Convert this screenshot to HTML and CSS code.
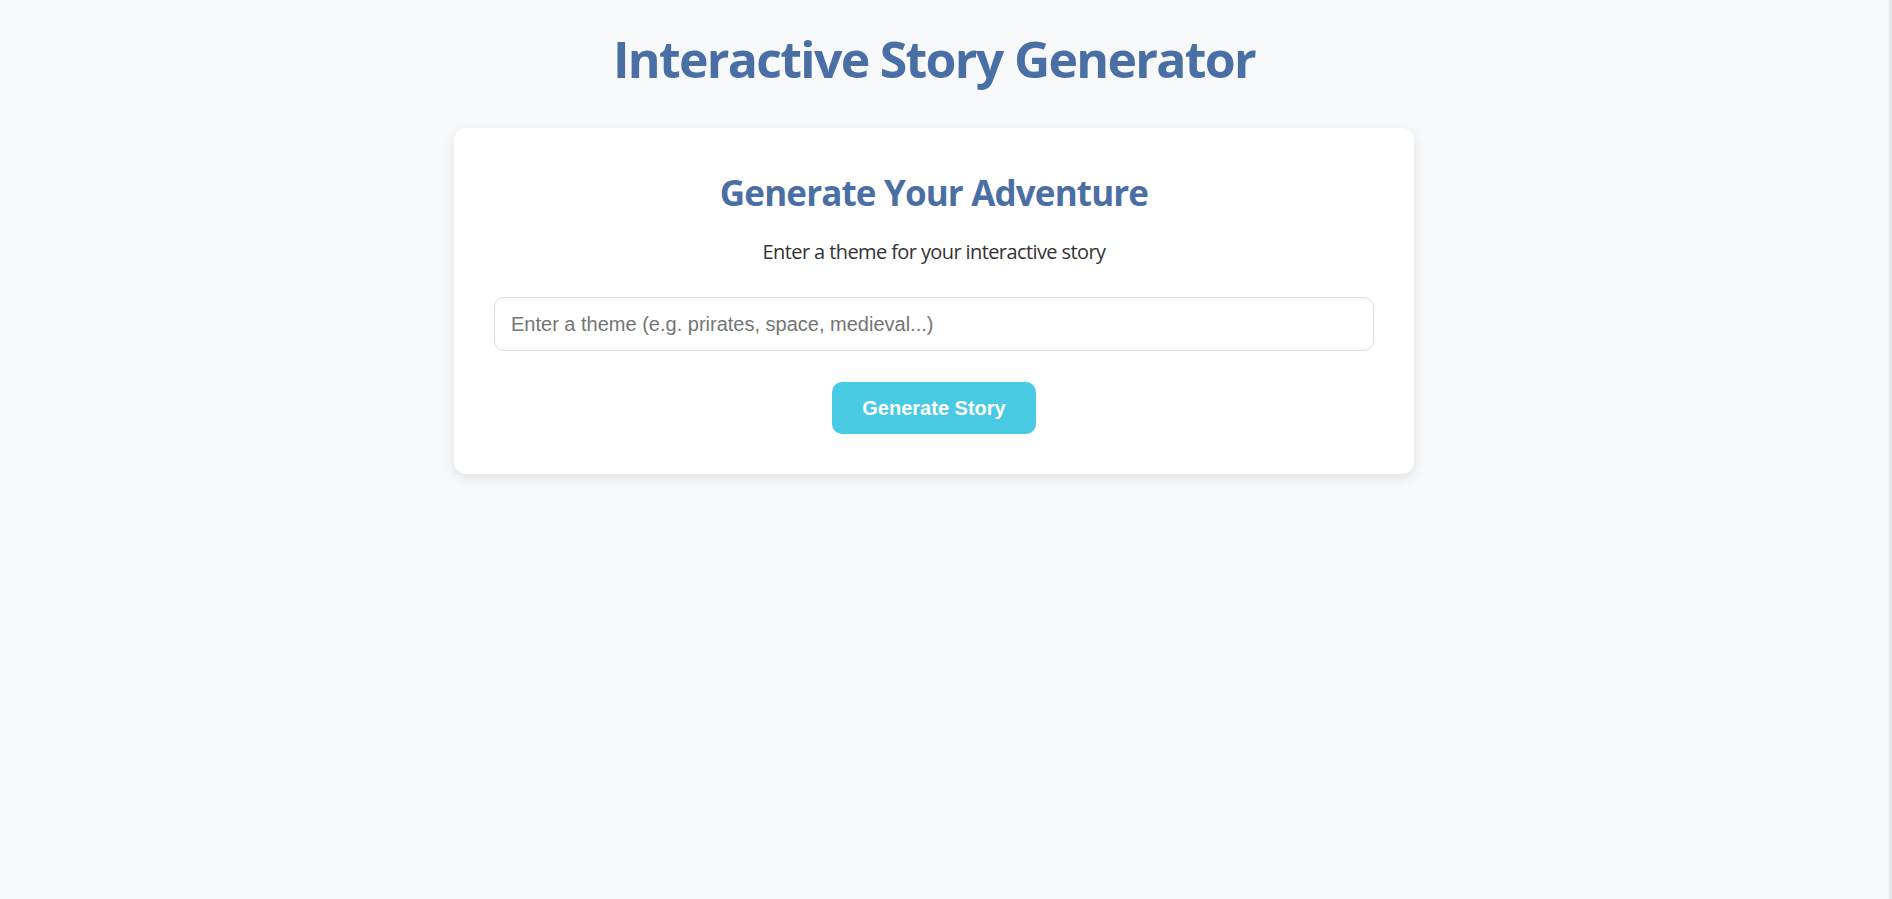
FILE: index.html
```html
<!DOCTYPE html>
<html lang="en">
<head>
<meta charset="utf-8">
<title>Interactive Story Generator</title>
<link rel="stylesheet" href="styles.css">
</head>
<body>
<div class="page">
  <h1 class="title">Interactive Story Generator</h1>
  <section class="card">
    <h2 class="card-title">Generate Your Adventure</h2>
    <p class="card-sub">Enter a theme for your interactive story</p>
    <input class="theme-input" type="text" placeholder="Enter a theme (e.g. prirates, space, medieval...)">
    <button class="gen-btn" type="button">Generate Story</button>
  </section>
</div>
<div class="edge"></div>
</body>
</html>
```
FILE: styles.css
```css
html, body {
  height: 100%;
}
body {
  margin: 0;
  display: flex;
  background: #f8f9fa;
  font-family: "Open Sans", "Noto Sans", sans-serif;
  color: #333;
}
.page {
  flex: 1;
  display: flex;
  flex-direction: column;
  align-items: center;
  padding-right: 21px;
}
.edge {
  width: 3px;
  background: #e6e7e9;
}
.title {
  margin: 29px 0 39px;
  font-size: 50px;
  line-height: 60px;
  font-weight: 700;
  letter-spacing: -1.7px;
  color: #4a6fa5;
  text-align: center;
}
.card {
  box-sizing: border-box;
  width: 960px;
  padding: 40px;
  background: #fff;
  border-radius: 12px;
  box-shadow: 0 4px 12px rgba(0, 0, 0, 0.1);
  display: flex;
  flex-direction: column;
  align-items: center;
}
.card-title {
  margin: 4px 0 23px;
  font-size: 35px;
  line-height: 42px;
  font-weight: 700;
  letter-spacing: -0.85px;
  color: #4a6fa5;
}
.card-sub {
  margin: 0 0 30px;
  font-size: 20px;
  line-height: 30px;
  letter-spacing: -0.6px;
  color: #333;
}
.theme-input {
  box-sizing: border-box;
  width: 100%;
  height: 54px;
  margin: 0 0 31px;
  padding: 15px 16px;
  border: 1px solid #ddd;
  border-radius: 10px;
  font-family: "Liberation Sans", Arial, sans-serif;
  font-size: 20px;
  line-height: 22px;
  color: #333;
  outline: none;
}
.theme-input::placeholder {
  color: #757575;
}
.gen-btn {
  padding: 15px 30px;
  border: none;
  border-radius: 10px;
  background: #48cae4;
  color: #fff;
  font-family: "Liberation Sans", Arial, sans-serif;
  font-size: 20px;
  line-height: 22px;
  font-weight: 700;
  cursor: pointer;
}
```
